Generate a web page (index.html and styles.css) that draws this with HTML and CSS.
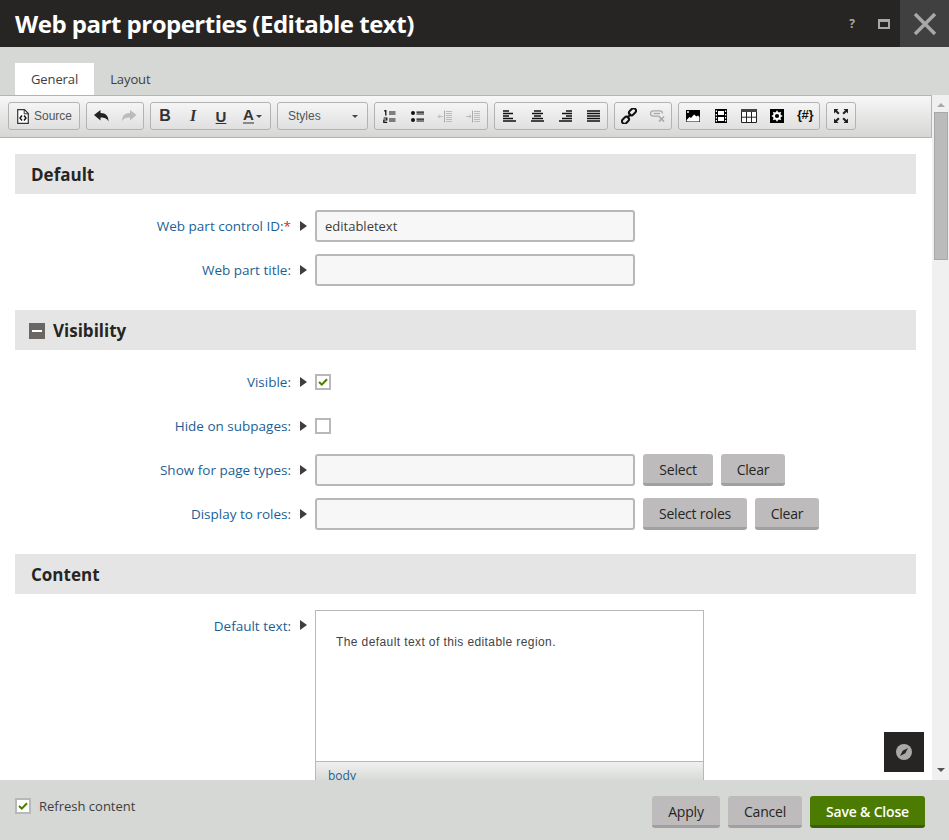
FILE: index.html
```html
<!DOCTYPE html>
<html lang="en">
<head>
    <meta charset="UTF-8">
    <title>Web part properties (Editable text)</title>
    <link rel="stylesheet" href="styles.css">
</head>
<body>
<div class="dialog">
    <div class="titlebar">
        <h1 class="title">Web part properties (Editable text)</h1>
        <span class="title-help">?</span>
        <span class="title-max"></span>
        <span class="title-close">
            <svg width="24" height="24" viewBox="0 0 24 24"><path d="M2 2L22 22M22 2L2 22" stroke="#a8a8a8" stroke-width="3.4" fill="none"/></svg>
        </span>
    </div>

    <div class="tabs">
        <span class="tab tab-active">General</span>
        <span class="tab">Layout</span>
    </div>

    <div class="middle">
        <div class="main">
            <div class="toolbar">
                <div class="tool-group source-btn">
                    <svg width="12" height="15" viewBox="0 0 12 15"><path d="M.7 .7H7.5L11.3 4.5V14.3H.7Z" fill="#fff" stroke="#333" stroke-width="1.2"/><path d="M7.2 .7V4.8H11.3" fill="none" stroke="#333"/><path d="M5 6.5L3 9L5 11.5M7 6.5L9 9L7 11.5" stroke="#111" stroke-width="1.4" fill="none"/></svg>
                    <span>Source</span>
                </div>
                <div class="tool-group">
                    <span class="tool"><svg width="15" height="12" viewBox="0 0 15 12"><path d="M0 5L6.5 0V3C12 3 14.5 6 14.5 11.5C13 8.5 11 7.5 6.5 7.5V10.5Z" fill="#222"/></svg></span>
                    <span class="tool"><svg width="15" height="12" viewBox="0 0 15 12"><path d="M14.5 5L8 0V3C2.5 3 0 6 0 11.5C1.5 8.5 3.5 7.5 8 7.5V10.5Z" fill="#bbb"/></svg></span>
                </div>
                <div class="tool-group">
                    <span class="tool fmt fmt-b">B</span>
                    <span class="tool fmt fmt-i">I</span>
                    <span class="tool fmt fmt-u">U</span>
                    <span class="tool tool-color">
                        <span class="color-a">A</span>
                        <span class="caret-small"></span>
                    </span>
                </div>
                <div class="tool-group styles-select">
                    <span>Styles</span>
                    <span class="caret-small"></span>
                </div>
                <div class="tool-group">
                    <span class="tool"><svg width="13" height="13" viewBox="0 0 13 13"><path d="M6 2H12.5M6 4H12.5M6 9H12.5M6 11H12.5" stroke="#111" stroke-width="1.2"/><path d="M1.2 1.2L2.8 .5V5.5" stroke="#111" stroke-width="1.3" fill="none"/><path d="M.6 8H3.8V10H.8V12.4H4.2" stroke="#111" stroke-width="1.2" fill="none"/></svg></span>
                    <span class="tool"><svg width="13" height="13" viewBox="0 0 13 13"><circle cx="2" cy="3" r="2" fill="#111"/><circle cx="2" cy="10" r="2" fill="#111"/><path d="M5.5 2.2H13M5.5 4H13M5.5 9.2H13M5.5 11H13" stroke="#111" stroke-width="1.2"/></svg></span>
                    <span class="tool"><svg width="14" height="13" viewBox="0 0 14 13"><path d="M6.5 .5V12.5" stroke="#aaa"/><path d="M8 1.5H14M8 3.5H14M8 5.5H14M8 7.5H14M8 9.5H14M8 11.5H14" stroke="#bbb"/><path d="M0 6.5H5M2 4.5L0 6.5L2 8.5" stroke="#bbb" fill="none"/></svg></span>
                    <span class="tool"><svg width="14" height="13" viewBox="0 0 14 13"><path d="M6.5 .5V12.5" stroke="#aaa"/><path d="M8 1.5H14M8 3.5H14M8 5.5H14M8 7.5H14M8 9.5H14M8 11.5H14" stroke="#bbb"/><path d="M0 6.5H5M3 4.5L5 6.5L3 8.5" stroke="#bbb" fill="none"/></svg></span>
                </div>
                <div class="tool-group">
                    <span class="tool"><svg width="13" height="12" viewBox="0 0 13 12"><path d="M0 1H6M0 3.5H10M0 6H6M0 8.5H10M0 11H13" stroke="#111" stroke-width="1.5"/></svg></span>
                    <span class="tool"><svg width="13" height="12" viewBox="0 0 13 12"><path d="M3 1H10M1 3.5H12M3 6H10M1 8.5H12M0 11H13" stroke="#111" stroke-width="1.5"/></svg></span>
                    <span class="tool"><svg width="13" height="12" viewBox="0 0 13 12"><path d="M7 1H13M3 3.5H13M7 6H13M3 8.5H13M0 11H13" stroke="#111" stroke-width="1.5"/></svg></span>
                    <span class="tool"><svg width="13" height="12" viewBox="0 0 13 12"><path d="M0 1H13M0 3.5H13M0 6H13M0 8.5H13M0 11H13" stroke="#111" stroke-width="1.5"/></svg></span>
                </div>
                <div class="tool-group">
                    <span class="tool"><svg width="16" height="16" viewBox="0 0 16 16"><g fill="none" stroke="#111" stroke-width="2"><rect x="7.6" y="1.3" width="7.8" height="5" rx="2.5" transform="rotate(-45 11.5 3.8)"/><rect x=".6" y="9.7" width="7.8" height="5" rx="2.5" transform="rotate(-45 4.5 12.2)"/><path d="M6 10L10 6"/></g></svg></span>
                    <span class="tool"><svg width="15" height="12" viewBox="0 0 15 12"><g fill="none" stroke="#a8a8a8" stroke-width="1.3"><path d="M9.5 6.2H3.2A2.7 2.7 0 0 1 3.2 .8H9.8A2.7 2.7 0 0 1 12.5 3.5"/><path d="M3.5 3.5H10"/><path d="M9 6.5L14 11.5M14 6.5L9 11.5" stroke-width="1.7"/></g></svg></span>
                </div>
                <div class="tool-group">
                    <span class="tool"><svg width="14" height="12" viewBox="0 0 14 12"><rect width="14" height="12" fill="#000"/><path d="M.6 10L3.5 7L5 8L8 4.5L10.5 6.5L12 5.5L13.4 7V11.4H.6Z" fill="#fff"/><circle cx="2" cy="2" r="1" fill="#fff"/></svg></span>
                    <span class="tool"><svg width="12" height="14" viewBox="0 0 12 14"><rect width="12" height="14" fill="#000"/><path d="M3 2H9V6H3ZM3 8H9V12H3Z" fill="#fff"/><path d="M.8 1.5H2V3H.8ZM.8 5H2V6.5H.8ZM.8 8H2V9.5H.8ZM.8 11H2V12.5H.8ZM10 1.5H11.2V3H10ZM10 5H11.2V6.5H10ZM10 8H11.2V9.5H10ZM10 11H11.2V12.5H10Z" fill="#fff"/></svg></span>
                    <span class="tool"><svg width="16" height="14" viewBox="0 0 16 14"><rect width="16" height="14" fill="#fff"/><rect width="16" height="3" fill="#444"/><path d="M.5 3V13.5H15.5V3M.5 8.2H15.5M5.5 3V13.5M10.5 3V13.5" stroke="#222" fill="none"/></svg></span>
                    <span class="tool"><svg width="14" height="14" viewBox="0 0 14 14"><rect width="14" height="14" fill="#000"/><circle cx="7" cy="7" r="3" fill="none" stroke="#fff" stroke-width="1.8"/><path d="M7 1.8V4M7 10V12.2M1.8 7H4M10 7H12.2M3.3 3.3L4.9 4.9M9.1 9.1L10.7 10.7M10.7 3.3L9.1 4.9M4.9 9.1L3.3 10.7" stroke="#fff" stroke-width="1.6"/></svg></span>
                    <span class="tool macro">{#}</span>
                </div>
                <div class="tool-group">
                    <span class="tool"><svg width="14" height="14" viewBox="0 0 14 14"><path d="M0 0H4.5L3 1.5L5.6 4.1L4.1 5.6L1.5 3L0 4.5ZM14 0V4.5L12.5 3L9.9 5.6L8.4 4.1L11 1.5L9.5 0ZM0 14V9.5L1.5 11L4.1 8.4L5.6 9.9L3 12.5L4.5 14ZM14 14H9.5L11 12.5L8.4 9.9L9.9 8.4L12.5 11L14 9.5Z" fill="#222"/></svg></span>
                </div>
            </div>

            <div class="content">
                <div class="section-head">Default</div>
                <div class="row">
                    <label class="row-label">Web part control ID:<span class="required">*</span></label>
                    <span class="arrow"></span>
                    <input class="text-input" type="text" value="editabletext">
                </div>
                <div class="row">
                    <label class="row-label">Web part title:</label>
                    <span class="arrow"></span>
                    <input class="text-input" type="text">
                </div>

                <div class="section-head section-gap">
                    <span class="collapse"></span>Visibility
                </div>
                <div class="row">
                    <label class="row-label">Visible:</label>
                    <span class="arrow"></span>
                    <span class="check">
                        <svg width="10" height="8" viewBox="0 0 10 8"><path d="M1 4L3.8 6.6L9 1.2" stroke="#4a7d00" stroke-width="2" fill="none"/></svg>
                    </span>
                </div>
                <div class="row">
                    <label class="row-label">Hide on subpages:</label>
                    <span class="arrow"></span>
                    <span class="check"></span>
                </div>
                <div class="row">
                    <label class="row-label">Show for page types:</label>
                    <span class="arrow"></span>
                    <input class="text-input" type="text">
                    <button class="btn btn-select">Select</button>
                    <button class="btn btn-clear">Clear</button>
                </div>
                <div class="row">
                    <label class="row-label">Display to roles:</label>
                    <span class="arrow"></span>
                    <input class="text-input" type="text">
                    <button class="btn btn-roles">Select roles</button>
                    <button class="btn btn-clear">Clear</button>
                </div>

                <div class="section-head section-gap">Content</div>
                <div class="row row-top">
                    <label class="row-label">Default text:</label>
                    <span class="arrow"></span>
                    <div class="editor">
                        <div class="editor-body">The default text of this editable region.</div>
                        <div class="editor-path">body</div>
                    </div>
                </div>
            </div>

            <span class="compass">
                <svg width="16" height="16" viewBox="0 0 16 16"><circle cx="8" cy="8" r="8" fill="#a9a9a9"/><path d="M12 4L9.3 9.3L4 12L6.7 6.7Z" fill="#262524"/></svg>
            </span>
        </div>

        <div class="scrollbar">
            <span class="scroll-up"></span>
            <span class="scroll-thumb"></span>
            <span class="scroll-down"></span>
        </div>
    </div>

    <div class="footer">
        <span class="check check-footer">
            <svg width="10" height="8" viewBox="0 0 10 8"><path d="M1 4L3.8 6.6L9 1.2" stroke="#4a7d00" stroke-width="2" fill="none"/></svg>
        </span>
        <span class="refresh-label">Refresh content</span>
        <button class="btn btn-apply">Apply</button>
        <button class="btn btn-cancel">Cancel</button>
        <button class="btn btn-save">Save &amp; Close</button>
    </div>
</div>
</body>
</html>
```

FILE: styles.css
```css
html, body {
    margin: 0;
    padding: 0;
    overflow: hidden;
}
body {
    font-family: "Open Sans", sans-serif;
    font-size: 14px;
    color: #262524;
}
.dialog {
    width: 949px;
    height: 840px;
    display: flex;
    flex-direction: column;
}

/* title bar */
.titlebar {
    height: 47px;
    flex: none;
    background-color: #262524;
    display: flex;
    align-items: center;
}
.title {
    margin: 0 0 0 15px;
    flex: 1;
    font-size: 24px;
    font-weight: 700;
    color: #fff;
    letter-spacing: -0.5px;
}
.title-help {
    width: 14px;
    text-align: center;
    font-size: 12px;
    font-weight: 700;
    color: #a8a8a8;
    margin-right: 19px;
}
.title-max {
    width: 8px;
    height: 5px;
    border: 2px solid #a8a8a8;
    border-top-width: 3px;
    margin-right: 10px;
}
.title-close {
    width: 49px;
    height: 47px;
    background-color: #404040;
    display: flex;
    align-items: center;
    justify-content: center;
}

/* tabs */
.tabs {
    height: 48px;
    flex: none;
    background-color: #d6d8d5;
    display: flex;
    align-items: flex-end;
    padding-left: 15px;
    box-sizing: border-box;
}
.tab {
    height: 32px;
    line-height: 33px;
    padding: 0 16px;
    font-size: 13px;
    letter-spacing: -0.1px;
    color: #403e3d;
}
.tab-active {
    background-color: #fff;
}

/* middle part */
.middle {
    flex: 1;
    min-height: 0;
    display: flex;
}
.main {
    flex: 1;
    min-width: 0;
    position: relative;
    overflow: hidden;
    background-color: #fff;
}
.scrollbar {
    width: 17px;
    flex: none;
    background-color: #f0f0f0;
    display: flex;
    flex-direction: column;
    align-items: center;
}
.scroll-up {
    margin-top: 8px;
    border: 4px solid transparent;
    border-top: 0;
    border-bottom: 4px solid #a8a8a8;
}
.scroll-thumb {
    width: 14px;
    height: 148px;
    margin-top: 5px;
    box-sizing: border-box;
    border: 1px solid #a8a8a8;
    background-color: #bbb;
}
.scroll-down {
    margin-top: auto;
    margin-bottom: 8px;
    border: 4px solid transparent;
    border-bottom: 0;
    border-top: 4px solid #555;
}

/* toolbar */
.toolbar {
    height: 43px;
    box-sizing: border-box;
    border-top: 1px solid #b5b5b5;
    border-bottom: 1px solid #b5b5b5;
    border-right: 1px solid #b5b5b5;
    background: linear-gradient(#f7f7f7, #d6d7d4);
    display: flex;
    gap: 6px;
    padding: 6px 0 0 8px;
}
.tool-group {
    height: 28px;
    box-sizing: border-box;
    border: 1px solid #b3b3b3;
    border-radius: 3px;
    display: flex;
    background: linear-gradient(#f5f5f5, #e0e0e0);
}
.tool {
    width: 28px;
    height: 26px;
    display: flex;
    align-items: center;
    justify-content: center;
}
.source-btn {
    width: 72px;
    align-items: center;
    padding-left: 8px;
    gap: 5px;
    font-family: "Liberation Sans", sans-serif;
    font-size: 12px;
    color: #555;
}
.fmt {
    font-family: "Liberation Sans", sans-serif;
    font-size: 16px;
    font-weight: 700;
    color: #333;
}
.fmt-i {
    font-style: italic;
    font-family: "Liberation Serif", serif;
}
.fmt-u {
    text-decoration: underline;
    font-size: 15px;
}
.tool-color {
    width: 35px;
    gap: 2px;
}
.color-a {
    font-family: "Liberation Sans", sans-serif;
    font-size: 15px;
    font-weight: 700;
    line-height: 14px;
    color: #333;
    border-bottom: 2px solid #888;
}
.caret-small {
    border: 3px solid transparent;
    border-bottom: 0;
    border-top: 3px solid #444;
}
.styles-select {
    width: 91px;
    align-items: center;
    justify-content: space-between;
    padding: 0 9px 0 10px;
    font-family: "Liberation Sans", sans-serif;
    font-size: 12px;
    color: #555;
}
.macro {
    font-family: "Liberation Sans", sans-serif;
    font-size: 13px;
    font-weight: 700;
    letter-spacing: -0.4px;
    color: #111;
    padding-bottom: 3px;
    box-sizing: border-box;
}

/* form */
.content {
    padding: 16px 16px 0 15px;
}
.section-head {
    height: 40px;
    box-sizing: border-box;
    padding: 1px 0 0 16px;
    background-color: #e5e5e5;
    margin-bottom: 16px;
    font-size: 17px;
    font-weight: 700;
    display: flex;
    align-items: center;
}
.section-gap {
    margin-top: 24px;
}
.collapse {
    width: 16px;
    height: 16px;
    margin-left: -2px;
    margin-right: 8px;
    background: linear-gradient(#fff, #fff) center / 10px 2px no-repeat #6a6663;
}
.row {
    display: flex;
    align-items: center;
    height: 32px;
    margin-bottom: 12px;
}
.row-top {
    align-items: flex-start;
    height: 200px;
}
.row-label {
    width: 276px;
    text-align: right;
    font-size: 13.5px;
    color: #1b5f96;
}
.row-top .row-label {
    line-height: 32px;
}
.required {
    color: #d22;
}
.arrow {
    margin-left: 9px;
    margin-right: 8px;
    border: 5.5px solid transparent;
    border-right: 0;
    border-left: 7px solid #403e3d;
}
.row-top .arrow {
    margin-top: 10px;
}
.text-input {
    width: 320px;
    height: 32px;
    box-sizing: border-box;
    border: 2px solid #b8b8b8;
    border-radius: 3px;
    background-color: #f7f7f7;
    padding: 0 8px;
    font-family: "Open Sans", sans-serif;
    font-size: 13px;
    color: #403e3d;
    outline: none;
}
.check {
    width: 16px;
    height: 16px;
    box-sizing: border-box;
    border: 2px solid #b8b8b8;
    background-color: #fff;
    display: flex;
    align-items: center;
    justify-content: center;
}
.btn {
    height: 32px;
    box-sizing: border-box;
    border: none;
    border-bottom: 3px solid #a19f9f;
    border-radius: 3px;
    background-color: #bdbbbb;
    font-family: "Open Sans", sans-serif;
    font-size: 14px;
    color: #262524;
    letter-spacing: -0.2px;
    padding: 2px 0 0;
    margin-left: 8px;
}
.btn-select { width: 70px; }
.btn-clear { width: 64px; }
.btn-roles { width: 104px; }
.btn-apply { width: 68px; }
.btn-cancel { width: 74px; }
.btn-save {
    width: 115px;
    background-color: #4b7b00;
    border-bottom-color: #3a5f00;
    color: #fff;
    font-weight: 600;
}
.editor {
    width: 389px;
    box-sizing: border-box;
    border: 1px solid #b8b8b8;
}
.editor-body {
    height: 150px;
    box-sizing: border-box;
    padding: 24px 20px 0;
    font-family: "Liberation Sans", sans-serif;
    font-size: 12px;
    color: #444;
    letter-spacing: 0.4px;
}
.editor-path {
    height: 40px;
    border-top: 1px solid #b8b8b8;
    background: linear-gradient(#f0f0f0, #d6d8d5 20px);
    padding-left: 12px;
    font-size: 12px;
    line-height: 27px;
    color: #1b5f96;
}
.compass {
    position: absolute;
    right: 8px;
    bottom: 8px;
    width: 40px;
    height: 40px;
    background-color: #262524;
    display: flex;
    align-items: center;
    justify-content: center;
}

/* footer */
.footer {
    height: 60px;
    flex: none;
    box-sizing: border-box;
    background-color: #d6d8d5;
    display: flex;
    align-items: flex-start;
    padding: 16px 24px 0 15px;
    gap: 8px;
}
.check-footer {
    margin-top: 2px;
}
.refresh-label {
    flex: 1;
    font-size: 13px;
    line-height: 20px;
    color: #403e3d;
}
.footer .btn {
    margin-left: 0;
}
```
